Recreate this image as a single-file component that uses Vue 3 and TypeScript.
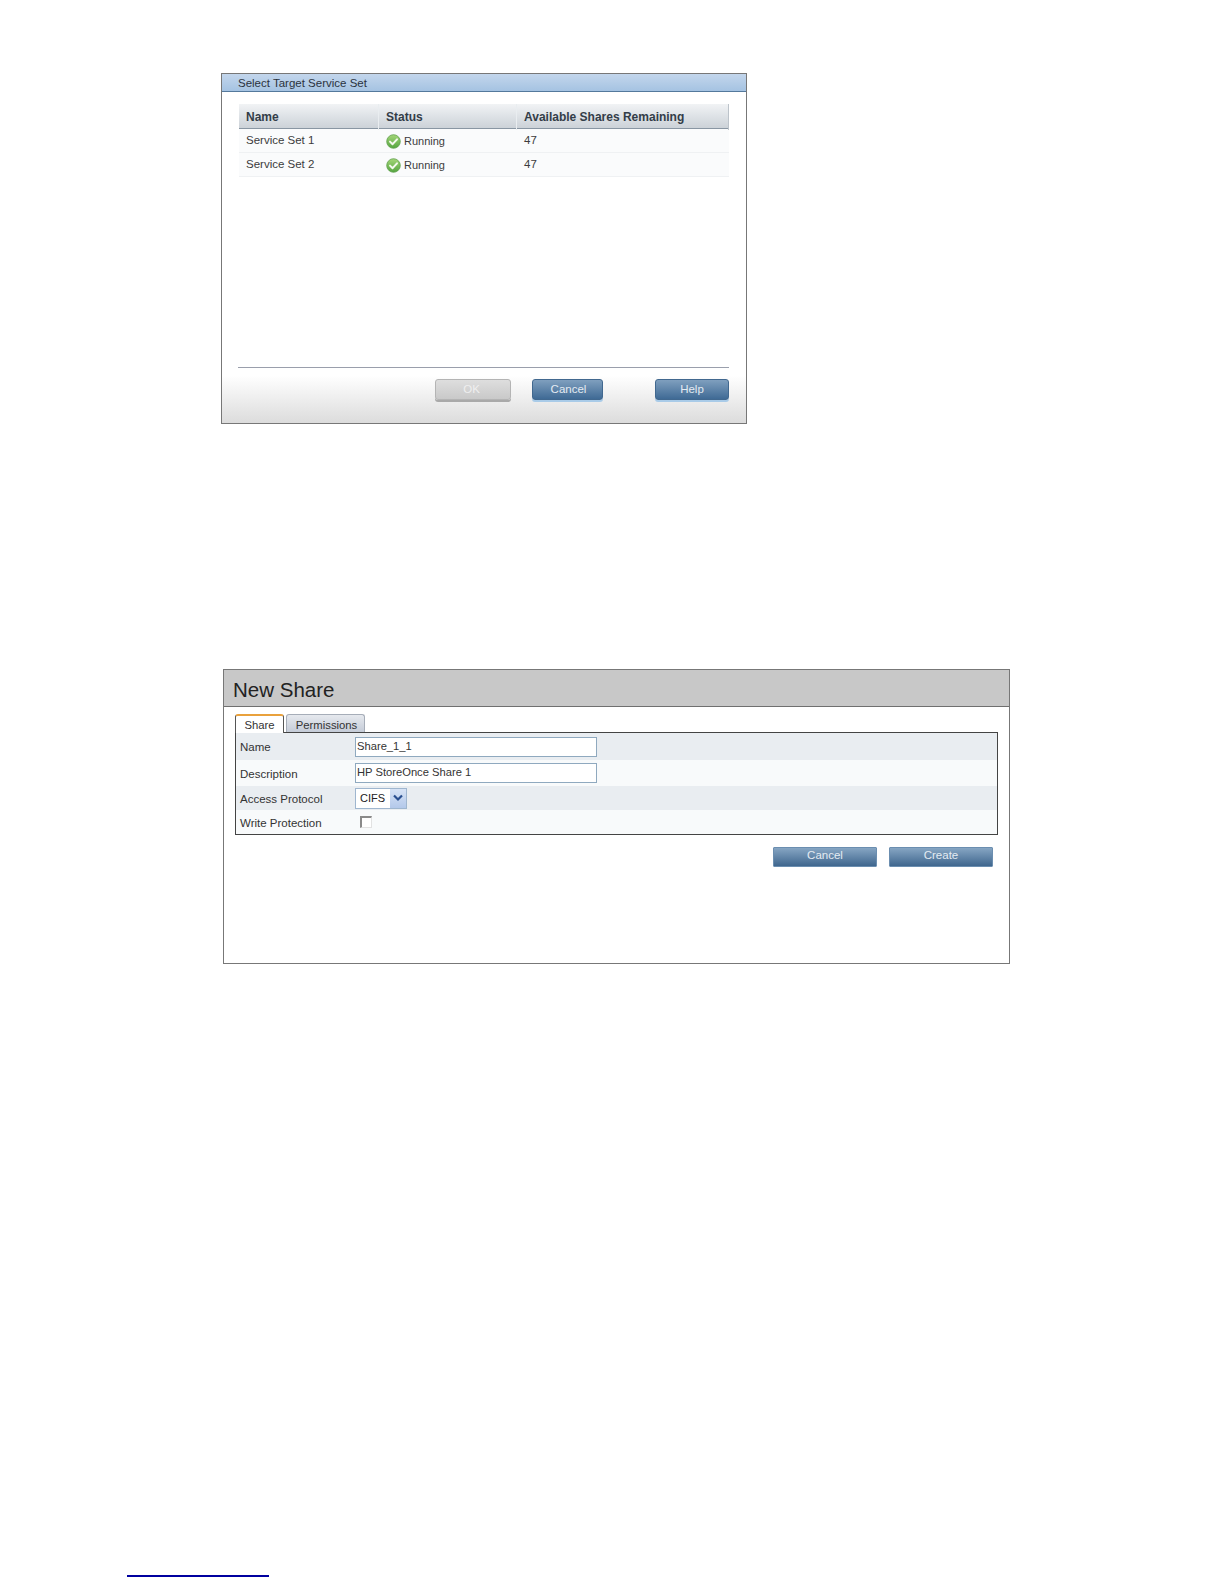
<script setup lang="ts">
interface ServiceSet { name: string; status: string; remaining: number }
const serviceSets: ServiceSet[] = [
  { name: 'Service Set 1', status: 'Running', remaining: 47 },
  { name: 'Service Set 2', status: 'Running', remaining: 47 },
]
</script>

<template>
  <div class="page">
    <section class="target">
      <header class="target-title">Select Target Service Set</header>
      <div class="target-table">
        <div class="thead">
          <div class="th">Name</div>
          <div class="th">Status</div>
          <div class="th">Available Shares Remaining</div>
        </div>
        <div v-for="s in serviceSets" :key="s.name" class="tr">
          <div class="td">{{ s.name }}</div>
          <div class="td status">
            <svg class="ok-icon" width="15" height="15" viewBox="0 0 15 15">
              <defs>
                <linearGradient id="okg" x1="0" y1="0" x2="0" y2="1">
                  <stop offset="0" stop-color="#a4d678" />
                  <stop offset="1" stop-color="#55a540" />
                </linearGradient>
              </defs>
              <circle cx="7.5" cy="7.5" r="6.8" fill="url(#okg)" stroke="#5f9f4c" stroke-width="0.8" />
              <path d="M4 7.6 L6.6 10.2 L11 5.3" fill="none" stroke="#f4f8ee" stroke-width="2" stroke-linecap="round" stroke-linejoin="round" />
            </svg>
            <span>{{ s.status }}</span>
          </div>
          <div class="td">{{ s.remaining }}</div>
        </div>
      </div>
      <div class="target-foot">
        <div class="foot-buttons">
          <button class="btn disabled ok" type="button">OK</button>
          <button class="btn cancel" type="button">Cancel</button>
          <button class="btn help" type="button">Help</button>
        </div>
      </div>
    </section>

    <section class="share">
      <h1 class="share-title">New Share</h1>
      <div class="tabs">
        <div class="tab active">Share</div>
        <div class="tab">Permissions</div>
      </div>
      <div class="form">
        <div class="row r1">
          <label>Name</label>
          <div class="field">Share_1_1</div>
        </div>
        <div class="row r2">
          <label>Description</label>
          <div class="field">HP StoreOnce Share 1</div>
        </div>
        <div class="row r3">
          <label>Access Protocol</label>
          <div class="select">
            <span>CIFS</span>
            <span class="arrow">
              <svg width="12" height="8" viewBox="0 0 12 8">
                <path d="M2 1.5 L6 5.5 L10 1.5" fill="none" stroke="#2a4f8f" stroke-width="2.2" />
              </svg>
            </span>
          </div>
        </div>
        <div class="row r4">
          <label>Write Protection</label>
          <div class="check"></div>
        </div>
      </div>
      <div class="share-actions">
        <button class="btn wide" type="button">Cancel</button>
        <button class="btn wide" type="button">Create</button>
      </div>
    </section>

    <div class="link-line"></div>
  </div>
</template>

<style scoped>
.page {
  height: 1584px;
  box-sizing: border-box;
  padding-top: 73px;
  background: #fff;
  font-family: "Liberation Sans", Arial, sans-serif;
  font-size: 11.5px;
  color: #333;
  overflow: hidden;
}

.target {
  width: 526px;
  height: 351px;
  margin-left: 221px;
  box-sizing: border-box;
  border: 1px solid #777;
  display: flex;
  flex-direction: column;
}
.target-title {
  height: 17px;
  line-height: 19px;
  padding-left: 16px;
  background: linear-gradient(#c3d6ec, #a5c3e2);
  border-bottom: 1px solid #54799c;
  color: #2b3340;
  flex: none;
}
.target-table {
  margin: 12px 17px 0 17px;
  height: 74px;
  flex: none;
}
.thead, .tr {
  display: grid;
  grid-template-columns: 140px 138px 1fr;
}
.thead {
  height: 25px;
  background: linear-gradient(#f1f3f5, #ccd2d8);
  border-bottom: 1px solid #8996a3;
  box-sizing: border-box;
}
.th {
  font-size: 12px;
  font-weight: bold;
  line-height: 26px;
  padding-left: 7px;
  color: #333d48;
  border-right: 1px solid #e9edf0;
}
.th:last-child { border-right: 1px solid #bcc3ca; }
.tr {
  height: 24px;
  background: #fafbfc;
  border-bottom: 1px solid #eff1f3;
  box-sizing: border-box;
}
.td {
  line-height: 23px;
  padding-left: 7px;
  color: #3c3c3c;
}
.td.status {
  display: flex;
  align-items: center;
  gap: 3px;
  padding-top: 1px;
  font-size: 11px;
  box-sizing: border-box;
}
.ok-icon { flex: none; }

.target-foot {
  margin-top: 189px;
  flex: 1;
  background: linear-gradient(#fff 0%, #fff 15%, #dcdcdc 100%);
}
.foot-buttons {
  margin: 0 17px 0 16px;
  border-top: 1px solid #9a9fac;
  height: 100%;
  box-sizing: border-box;
  display: flex;
  padding: 11px 0 0 197px;
}
.btn {
  display: block;
  height: 21px;
  padding: 0 0 2px;
  border: 1px solid #41688f;
  border-radius: 3px;
  background: linear-gradient(#7f9fbe, #3f6a95);
  color: #e4ebf2;
  font: 11.5px "Liberation Sans", Arial, sans-serif;
  box-shadow: 0 2px 0 #a9cbe8;
}
.btn.ok { width: 76px; padding-right: 3px; }
.btn.disabled {
  border-color: #b4b4b4;
  background: linear-gradient(#dedede, #c9c9c9);
  color: #efefef;
  box-shadow: 0 2px 0 #a9a9a9;
}
.btn.cancel { width: 71px; margin-left: 21px; padding-left: 2px; }
.btn.help { width: 74px; margin-left: 52px; }

.share {
  width: 787px;
  height: 295px;
  margin: 245px 0 0 223px;
  box-sizing: border-box;
  border: 1px solid #777;
}
.share-title {
  margin: 0;
  height: 36px;
  line-height: 39px;
  padding-left: 9px;
  background: #c8c8c8;
  border-bottom: 1px solid #6f6f6f;
  font-size: 20.5px;
  font-weight: normal;
  color: #222;
}
.tabs {
  display: flex;
  gap: 2px;
  margin: 7px 0 0 11px;
  height: 18px;
}
.tab {
  width: 79px;
  box-sizing: border-box;
  font-size: 11.3px;
  line-height: 21px;
  padding-left: 2px;
  text-align: center;
  background: linear-gradient(#e6e9ee, #c5ccd8);
  border: 1px solid #a6adb8;
  border-bottom: none;
  border-radius: 3px 3px 0 0;
  color: #333;
}
.tab.active {
  width: 49px;
  padding-left: 0;
  background: #fff;
  border-color: #555;
  border-top: 2px solid #e9a13c;
  position: relative;
  z-index: 1;
  height: 19px;
  line-height: 18px;
}
.form {
  width: 763px;
  height: 103px;
  margin-left: 11px;
  box-sizing: border-box;
  border: 1.5px solid #444;
  display: grid;
  grid-template-rows: 27px 26px 24px 1fr;
}
.row {
  display: grid;
  grid-template-columns: 119px 1fr;
  align-items: center;
}
.r1, .r3 { background: #e9edf1; }
.r2, .r4 { background: #f8fafb; }
label { padding-left: 4px; padding-top: 1px; color: #333; }
.field {
  width: 242px;
  height: 20px;
  box-sizing: border-box;
  border: 1px solid #8fa9bf;
  background: #fff;
  font-size: 11.2px;
  line-height: 16px;
  padding-left: 1px;
  color: #333;
}
.select {
  width: 52px;
  height: 21px;
  box-sizing: border-box;
  border: 1px solid #9fb6cf;
  background: #fff;
  display: flex;
  align-items: center;
  justify-content: space-between;
  padding-left: 4px;
  font-size: 11px;
  color: #222;
}
.arrow {
  width: 16px;
  height: 19px;
  display: flex;
  align-items: center;
  justify-content: center;
  background: linear-gradient(#d7e3f5, #b3c8ea);
}
.check {
  width: 12px;
  height: 12px;
  margin-left: 5px;
  box-sizing: border-box;
  background: #fff;
  border: 2px solid #8a8a8a;
  border-right: 1px solid #e2e2e2;
  border-bottom: 1px solid #e2e2e2;
}
.share-actions {
  display: flex;
  justify-content: flex-end;
  gap: 12px;
  margin: 12px 16px 0 0;
}
.btn.wide {
  width: 104px;
  height: 20px;
  border-radius: 1px;
  box-shadow: none;
  border-color: #6b8eb0;
  background: linear-gradient(#86a5c3, #3f668e);
  line-height: 15px;
  padding-bottom: 4px;
}

.link-line {
  width: 142px;
  height: 2px;
  margin: 611px 0 0 127px;
  background: #00009f;
}
</style>
